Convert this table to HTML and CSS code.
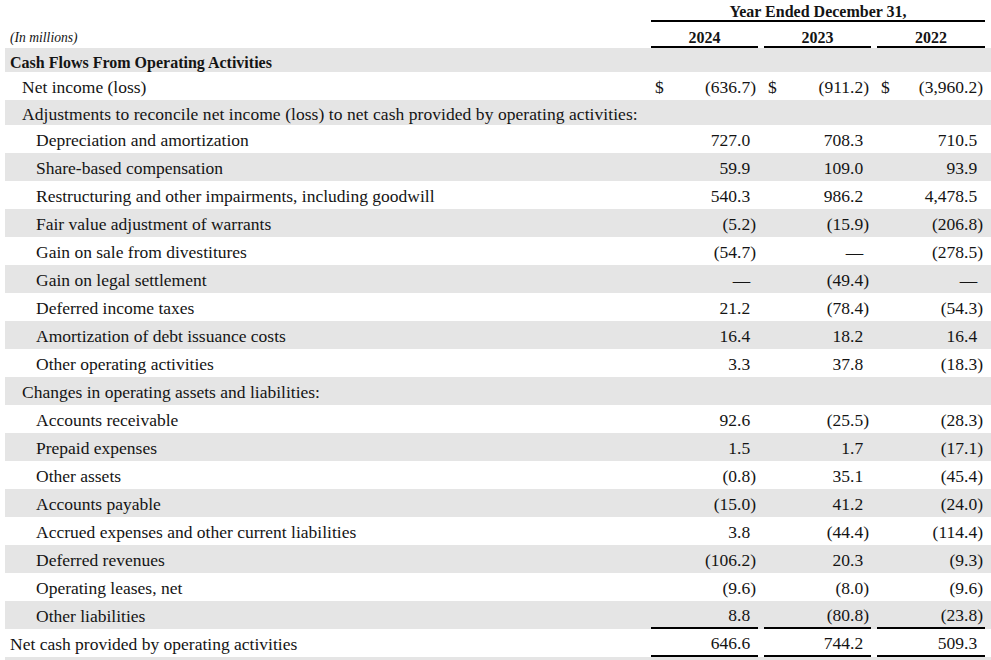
FILE: index.html
```html
<!DOCTYPE html>
<html lang="en">
<head>
<meta charset="utf-8">
<title>Cash Flows From Operating Activities</title>
<link rel="stylesheet" href="styles.css">
</head>
<body>
<div class="sheet">
  <div class="row head-top">
    <div class="label"></div>
    <div class="span-all">Year Ended December 31,</div>
  </div>
  <div class="row head-years">
    <div class="label units">(In millions)</div>
    <div class="year">2024</div><div class="gap"></div>
    <div class="year">2023</div><div class="gap"></div>
    <div class="year">2022</div>
  </div>

  <div class="row shade short"><div class="label bold l0">Cash Flows From Operating Activities</div></div>

  <div class="row"><div class="label l1">Net income (loss)</div>
    <div class="num"><span class="cur">$</span><span class="v">(636.7)</span></div><div class="gap"></div>
    <div class="num"><span class="cur">$</span><span class="v">(911.2)</span></div><div class="gap"></div>
    <div class="num"><span class="cur">$</span><span class="v">(3,960.2)</span></div>
  </div>

  <div class="row shade short2"><div class="label l1 spaced">Adjustments to reconcile net income (loss) to net cash provided by operating activities:</div></div>

  <div class="row"><div class="label l2">Depreciation and amortization</div>
    <div class="num"><span class="v">727.0<i class="p">)</i></span></div><div class="gap"></div>
    <div class="num"><span class="v">708.3<i class="p">)</i></span></div><div class="gap"></div>
    <div class="num"><span class="v">710.5<i class="p">)</i></span></div>
  </div>
  <div class="row shade"><div class="label l2">Share-based compensation</div>
    <div class="num"><span class="v">59.9<i class="p">)</i></span></div><div class="gap"></div>
    <div class="num"><span class="v">109.0<i class="p">)</i></span></div><div class="gap"></div>
    <div class="num"><span class="v">93.9<i class="p">)</i></span></div>
  </div>
  <div class="row"><div class="label l2">Restructuring and other impairments, including goodwill</div>
    <div class="num"><span class="v">540.3<i class="p">)</i></span></div><div class="gap"></div>
    <div class="num"><span class="v">986.2<i class="p">)</i></span></div><div class="gap"></div>
    <div class="num"><span class="v">4,478.5<i class="p">)</i></span></div>
  </div>
  <div class="row shade"><div class="label l2">Fair value adjustment of warrants</div>
    <div class="num"><span class="v">(5.2)</span></div><div class="gap"></div>
    <div class="num"><span class="v">(15.9)</span></div><div class="gap"></div>
    <div class="num"><span class="v">(206.8)</span></div>
  </div>
  <div class="row"><div class="label l2">Gain on sale from divestitures</div>
    <div class="num"><span class="v">(54.7)</span></div><div class="gap"></div>
    <div class="num"><span class="v">—<i class="p">)</i></span></div><div class="gap"></div>
    <div class="num"><span class="v">(278.5)</span></div>
  </div>
  <div class="row shade"><div class="label l2">Gain on legal settlement</div>
    <div class="num"><span class="v">—<i class="p">)</i></span></div><div class="gap"></div>
    <div class="num"><span class="v">(49.4)</span></div><div class="gap"></div>
    <div class="num"><span class="v">—<i class="p">)</i></span></div>
  </div>
  <div class="row"><div class="label l2">Deferred income taxes</div>
    <div class="num"><span class="v">21.2<i class="p">)</i></span></div><div class="gap"></div>
    <div class="num"><span class="v">(78.4)</span></div><div class="gap"></div>
    <div class="num"><span class="v">(54.3)</span></div>
  </div>
  <div class="row shade"><div class="label l2">Amortization of debt issuance costs</div>
    <div class="num"><span class="v">16.4<i class="p">)</i></span></div><div class="gap"></div>
    <div class="num"><span class="v">18.2<i class="p">)</i></span></div><div class="gap"></div>
    <div class="num"><span class="v">16.4<i class="p">)</i></span></div>
  </div>
  <div class="row"><div class="label l2">Other operating activities</div>
    <div class="num"><span class="v">3.3<i class="p">)</i></span></div><div class="gap"></div>
    <div class="num"><span class="v">37.8<i class="p">)</i></span></div><div class="gap"></div>
    <div class="num"><span class="v">(18.3)</span></div>
  </div>
  <div class="row shade"><div class="label l1">Changes in operating assets and liabilities:</div></div>
  <div class="row"><div class="label l2">Accounts receivable</div>
    <div class="num"><span class="v">92.6<i class="p">)</i></span></div><div class="gap"></div>
    <div class="num"><span class="v">(25.5)</span></div><div class="gap"></div>
    <div class="num"><span class="v">(28.3)</span></div>
  </div>
  <div class="row shade"><div class="label l2">Prepaid expenses</div>
    <div class="num"><span class="v">1.5<i class="p">)</i></span></div><div class="gap"></div>
    <div class="num"><span class="v">1.7<i class="p">)</i></span></div><div class="gap"></div>
    <div class="num"><span class="v">(17.1)</span></div>
  </div>
  <div class="row"><div class="label l2">Other assets</div>
    <div class="num"><span class="v">(0.8)</span></div><div class="gap"></div>
    <div class="num"><span class="v">35.1<i class="p">)</i></span></div><div class="gap"></div>
    <div class="num"><span class="v">(45.4)</span></div>
  </div>
  <div class="row shade"><div class="label l2">Accounts payable</div>
    <div class="num"><span class="v">(15.0)</span></div><div class="gap"></div>
    <div class="num"><span class="v">41.2<i class="p">)</i></span></div><div class="gap"></div>
    <div class="num"><span class="v">(24.0)</span></div>
  </div>
  <div class="row"><div class="label l2">Accrued expenses and other current liabilities</div>
    <div class="num"><span class="v">3.8<i class="p">)</i></span></div><div class="gap"></div>
    <div class="num"><span class="v">(44.4)</span></div><div class="gap"></div>
    <div class="num"><span class="v">(114.4)</span></div>
  </div>
  <div class="row shade"><div class="label l2">Deferred revenues</div>
    <div class="num"><span class="v">(106.2)</span></div><div class="gap"></div>
    <div class="num"><span class="v">20.3<i class="p">)</i></span></div><div class="gap"></div>
    <div class="num"><span class="v">(9.3)</span></div>
  </div>
  <div class="row"><div class="label l2">Operating leases, net</div>
    <div class="num"><span class="v">(9.6)</span></div><div class="gap"></div>
    <div class="num"><span class="v">(8.0)</span></div><div class="gap"></div>
    <div class="num"><span class="v">(9.6)</span></div>
  </div>
  <div class="row shade"><div class="label l2">Other liabilities</div>
    <div class="num rule"><span class="v">8.8<i class="p">)</i></span></div><div class="gap"></div>
    <div class="num rule"><span class="v">(80.8)</span></div><div class="gap"></div>
    <div class="num rule"><span class="v">(23.8)</span></div>
  </div>
  <div class="row"><div class="label l0">Net cash provided by operating activities</div>
    <div class="num rule"><span class="v">646.6<i class="p">)</i></span></div><div class="gap"></div>
    <div class="num rule"><span class="v">744.2<i class="p">)</i></span></div><div class="gap"></div>
    <div class="num rule"><span class="v">509.3<i class="p">)</i></span></div>
  </div>
  <div class="row shade tail"></div>
</div>
</body>
</html>
```

FILE: styles.css
```css
html, body {
  margin: 0;
  padding: 0;
  background: #ffffff;
}
body {
  font-family: "Liberation Serif", "Times New Roman", serif;
  font-size: 17.5px;
  color: #141414;
}
.sheet {
  margin-left: 5px;
  width: 986px;
}
.row {
  display: grid;
  grid-template-columns: 646px 107px 6px 107px 6px 108px 6px;
  height: 28px;
  align-items: center;
  line-height: 20px;
}
.shade {
  background: #e5e5e5;
}
.short { height: 24px; }
.short2 { height: 25px; }
.tail { height: 10px; }
.label {
  grid-column: 1;
  white-space: nowrap;
  padding-top: 2px;
}
.l0 { padding-left: 5px; }
.l1 { padding-left: 17px; }
.l2 { padding-left: 31px; }
.bold { font-weight: bold; font-size: 16px; padding-top: 5px; }
.spaced { letter-spacing: 0.06px; }

.head-top {
  height: 22px;
  align-items: end;
}
.span-all {
  grid-column: 2 / 7;
  text-align: center;
  font-weight: bold;
  font-size: 16px;
  line-height: 18px;
  box-sizing: border-box;
  border-bottom: 2px solid #000;
  padding-top: 3px;
  align-self: stretch;
  height: 22px;
}
.head-years {
  height: 26px;
  align-items: stretch;
}
.head-years .units {
  font-style: italic;
  font-size: 13.6px;
  padding-left: 5px;
  align-self: end;
  line-height: 16px;
  padding-bottom: 2px;
}
.year {
  font-weight: bold;
  font-size: 16px;
  text-align: center;
  border-bottom: 2px solid #000;
  display: flex;
  align-items: flex-end;
  justify-content: center;
  padding-bottom: 1px;
  line-height: 15px;
}
.num {
  display: flex;
  justify-content: space-between;
  align-items: center;
  padding: 2px 2px 0 4px;
  align-self: stretch;
  box-sizing: border-box;
}
.num .v {
  margin-left: auto;
}
.p {
  font-style: normal;
  visibility: hidden;
}
.rule {
  border-bottom: 2px solid #000;
}
```
